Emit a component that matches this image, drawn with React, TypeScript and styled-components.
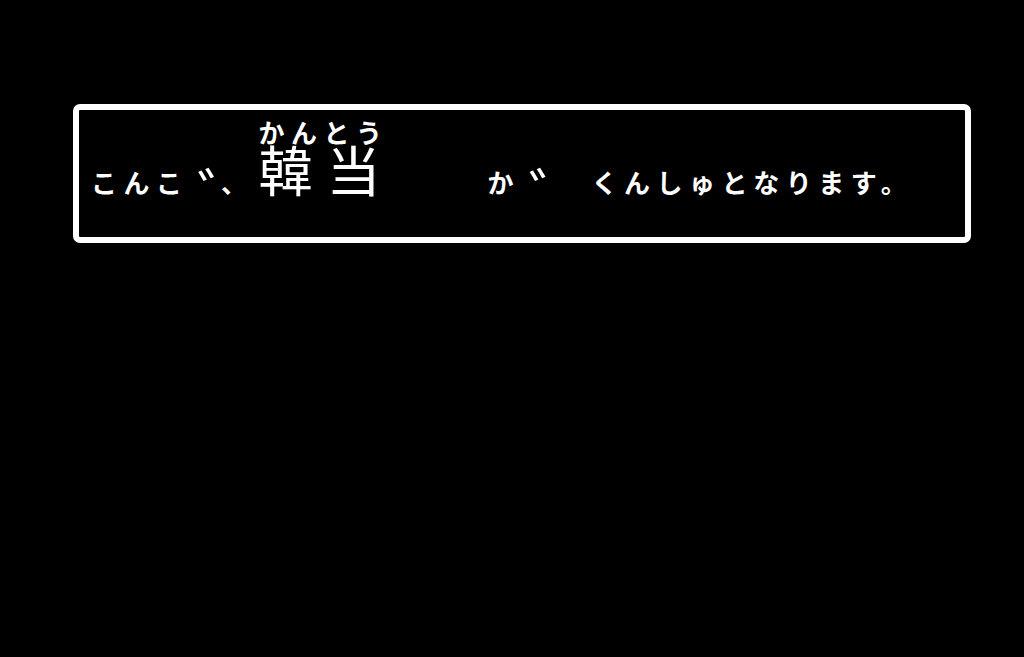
import React from "react";
import styled, { createGlobalStyle } from "styled-components";

const GlobalStyle = createGlobalStyle`
  html, body {
    margin: 0;
    padding: 0;
    background: #000;
  }
  body {
    font-family: "Noto Sans CJK JP", "Noto Sans", sans-serif;
    color: #fff;
  }
`;

const CELL = 32.5;

const Screen = styled.div`
  width: 1024px;
  height: 657px;
  box-sizing: border-box;
  padding: 104px 0 0 73px;
  background: #000;
`;

const MessageWindow = styled.div`
  width: 898px;
  height: 139px;
  box-sizing: border-box;
  border: 6px solid #fff;
  border-radius: 7px;
  padding: 11px 0 0 12px;
  display: flex;
  align-items: flex-start;
`;

const Line = styled.div`
  display: flex;
  align-items: flex-end;
`;

const Text = styled.span<{ $gap?: number }>`
  font-size: 26px;
  line-height: 26px;
  font-weight: 700;
  letter-spacing: ${CELL - 26}px;
  white-space: pre;
  margin-left: ${({ $gap }) => $gap ?? 0}px;
`;

// the voiced mark gets a whole cell of its own, as on the old console font
const Dakuten = styled.span`
  display: inline-block;
  vertical-align: top;
  width: ${CELL}px;
  height: 26px;
  margin-top: -6px;
  padding-left: 9px;
  box-sizing: border-box;
  font-size: 56px;
  line-height: 56px;
  font-weight: 400;
  letter-spacing: ${CELL - 56}px;
`;

const Name = styled.span<{ $gap?: number }>`
  display: inline-flex;
  flex-direction: column;
  align-items: flex-start;
  margin-left: ${({ $gap }) => $gap ?? 0}px;
`;

const Reading = styled.span`
  font-size: 26px;
  line-height: 22px;
  font-weight: 700;
  letter-spacing: ${CELL - 26}px;
  white-space: pre;
`;

const Kanji = styled.span`
  font-size: 54px;
  line-height: 52px;
  font-weight: 400;
  letter-spacing: 14px;
  white-space: pre;
`;

export default function App() {
  return (
    <>
      <GlobalStyle />
      <Screen>
        <MessageWindow>
          <Line>
            <Text>
              こんこ<Dakuten>゛</Dakuten>、
            </Text>
            <Name $gap={5}>
              <Reading>かんとう</Reading>
              <Kanji>韓当</Kanji>
            </Name>
            <Text $gap={93}>
              か<Dakuten>゛</Dakuten>
            </Text>
            <Text $gap={39}>くんしゅとなります。</Text>
          </Line>
        </MessageWindow>
      </Screen>
    </>
  );
}
